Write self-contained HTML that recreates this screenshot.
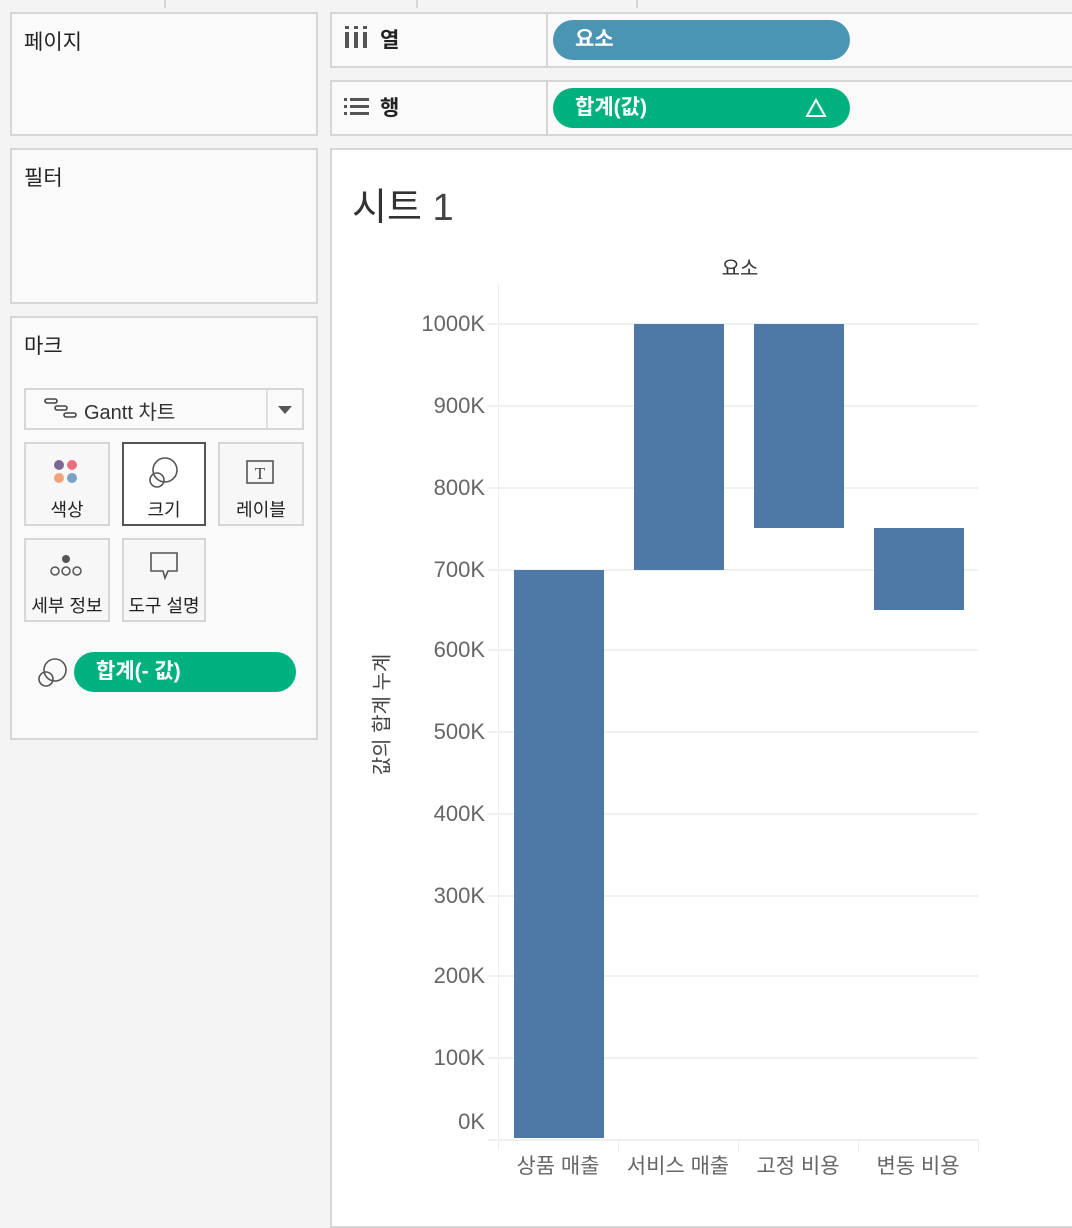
<!DOCTYPE html>
<html><head><meta charset="utf-8"><style>
*{margin:0;padding:0;box-sizing:border-box}
body{width:1072px;height:1196px;background:#f4f4f4;position:relative;overflow:hidden;font-family:"Liberation Sans","Noto Sans CJK KR",sans-serif;color:#222}
.p{position:absolute;background:#fafafa;border:2px solid #d6d6d6}
.t{position:absolute;font-size:21px}
.pill{position:absolute;border-radius:20px;color:#fff;font-size:21px;font-weight:bold;padding-left:22px;line-height:40px}
.btn{position:absolute;background:#f7f7f7;border:2px solid #d6d6d6;font-size:18px;text-align:center}
.lbl{position:absolute;right:0;width:150px;text-align:right;font-size:22px;color:#666}
.g{position:absolute;left:488px;width:490px;height:2px;background:#f0f0f0}
.bar{position:absolute;background:#4e79a7;width:90px}
.x{position:absolute;top:1150px;font-size:21px;color:#666;width:120px;text-align:center}
</style></head><body>
<div style="position:absolute;left:164px;top:0;width:2px;height:8px;background:#d6d6d6"></div>
<div style="position:absolute;left:416px;top:0;width:2px;height:8px;background:#d6d6d6"></div>
<div style="position:absolute;left:636px;top:0;width:2px;height:8px;background:#d6d6d6"></div>

<div class="p" style="left:10px;top:12px;width:308px;height:124px"></div>
<div class="t" style="left:24px;top:26px">페이지</div>
<div class="p" style="left:10px;top:148px;width:308px;height:156px"></div>
<div class="t" style="left:24px;top:162px">필터</div>
<div class="p" style="left:10px;top:316px;width:308px;height:424px"></div>
<div class="t" style="left:24px;top:330px">마크</div>

<div style="position:absolute;left:24px;top:388px;width:280px;height:42px;border:2px solid #d6d6d6;background:#fafafa"></div>
<div style="position:absolute;left:266px;top:390px;width:2px;height:38px;background:#e0e0e0"></div>
<svg style="position:absolute;left:42px;top:396px" width="36" height="26"><g fill="none" stroke="#444" stroke-width="1.6"><rect x="3" y="3" width="12" height="4" rx="2"/><rect x="13" y="10" width="12" height="4" rx="2"/><rect x="22" y="17" width="12" height="4" rx="2"/></g></svg>
<div style="position:absolute;left:84px;top:396px;font-size:20px;color:#333">Gantt 차트</div>
<div style="position:absolute;left:278px;top:406px;width:0;height:0;border-left:7px solid transparent;border-right:7px solid transparent;border-top:8px solid #555"></div>

<div class="btn" style="left:24px;top:442px;width:86px;height:84px"><div style="margin-top:52px">색상</div></div>
<svg style="position:absolute;left:52px;top:458px" width="28" height="28"><circle cx="7" cy="7" r="5" fill="#7a6796"/><circle cx="20" cy="7" r="5" fill="#ea6d7f"/><circle cx="7" cy="20" r="5" fill="#f0a37b"/><circle cx="20" cy="20" r="5" fill="#7aa1c6"/></svg>
<div class="btn" style="left:122px;top:442px;width:84px;height:84px;border-color:#555;background:#fff"><div style="margin-top:52px">크기</div></div>
<svg style="position:absolute;left:148px;top:456px" width="34" height="34"><g fill="none" stroke="#555" stroke-width="1.6"><circle cx="17" cy="14" r="12"/><circle cx="9" cy="24" r="7"/></g></svg>
<div class="btn" style="left:218px;top:442px;width:86px;height:84px"><div style="margin-top:52px">레이블</div></div>
<svg style="position:absolute;left:244px;top:458px" width="32" height="28"><rect x="3" y="3" width="26" height="22" fill="none" stroke="#555" stroke-width="1.6"/><text x="16" y="21" text-anchor="middle" font-family="Liberation Serif" font-size="17" fill="#444">T</text></svg>
<div class="btn" style="left:24px;top:538px;width:86px;height:84px"><div style="margin-top:52px">세부 정보</div></div>
<svg style="position:absolute;left:48px;top:552px" width="36" height="26"><circle cx="18" cy="7" r="4" fill="#555"/><g fill="none" stroke="#555" stroke-width="1.5"><circle cx="7" cy="19" r="4"/><circle cx="18" cy="19" r="4"/><circle cx="29" cy="19" r="4"/></g></svg>
<div class="btn" style="left:122px;top:538px;width:84px;height:84px"><div style="margin-top:52px">도구 설명</div></div>
<svg style="position:absolute;left:148px;top:550px" width="34" height="32"><path d="M3 3H29V21H20L17 28L15 21H3Z" fill="none" stroke="#555" stroke-width="1.6"/></svg>

<svg style="position:absolute;left:36px;top:656px" width="34" height="34"><g fill="none" stroke="#555" stroke-width="1.6"><circle cx="19" cy="14" r="11"/><circle cx="10" cy="23" r="7"/></g></svg>
<div class="pill" style="left:74px;top:652px;width:222px;background:#00b180">합계(- 값)</div>

<div class="p" style="left:330px;top:12px;width:750px;height:56px"></div>
<div style="position:absolute;left:546px;top:12px;width:2px;height:56px;background:#d6d6d6"></div>
<svg style="position:absolute;left:344px;top:24px" width="26" height="26"><g fill="#555"><rect x="1" y="2" width="4" height="3"/><rect x="1" y="8" width="4" height="16"/><rect x="10" y="2" width="4" height="3"/><rect x="10" y="8" width="4" height="16"/><rect x="19" y="2" width="4" height="3"/><rect x="19" y="8" width="4" height="16"/></g></svg>
<div class="t" style="left:380px;top:24px;font-weight:bold">열</div>
<div class="pill" style="left:553px;top:20px;width:297px;background:#4a95b3">요소</div>

<div class="p" style="left:330px;top:80px;width:750px;height:56px"></div>
<div style="position:absolute;left:546px;top:80px;width:2px;height:56px;background:#d6d6d6"></div>
<svg style="position:absolute;left:343px;top:96px" width="28" height="22"><g fill="#555"><rect x="1" y="2" width="3" height="3"/><rect x="7" y="2" width="19" height="3"/><rect x="1" y="9" width="3" height="3"/><rect x="7" y="9" width="19" height="3"/><rect x="1" y="16" width="3" height="3"/><rect x="7" y="16" width="19" height="3"/></g></svg>
<div class="t" style="left:380px;top:92px;font-weight:bold">행</div>
<div class="pill" style="left:553px;top:88px;width:297px;background:#00b180">합계(값)<svg style="position:absolute;left:252px;top:10px" width="22" height="20"><path d="M11 2L20 18H2Z" fill="none" stroke="#fff" stroke-width="2"/></svg></div>

<div style="position:absolute;left:330px;top:148px;width:750px;height:1080px;background:#fff;border:2px solid #d6d6d6"></div>
<div style="position:absolute;left:352px;top:176px;font-size:38px;color:#333">시트 <span style="font-weight:300;color:#444">1</span></div>
<div style="position:absolute;left:700px;top:252px;width:80px;text-align:center;font-size:20px;color:#333">요소</div>

<div style="position:absolute;left:498px;top:284px;width:1px;height:866px;background:#eee"></div>
<div class="g" style="top:323px"></div><div class="g" style="top:405px"></div><div class="g" style="top:487px"></div><div class="g" style="top:569px"></div><div class="g" style="top:649px"></div><div class="g" style="top:731px"></div><div class="g" style="top:813px"></div><div class="g" style="top:895px"></div><div class="g" style="top:975px"></div><div class="g" style="top:1057px"></div>
<div class="g" style="top:1139px"></div>

<div style="position:absolute;left:335px;top:0;width:150px;height:1196px">
<div class="lbl" style="top:311px">1000K</div><div class="lbl" style="top:393px">900K</div><div class="lbl" style="top:475px">800K</div><div class="lbl" style="top:557px">700K</div><div class="lbl" style="top:637px">600K</div><div class="lbl" style="top:719px">500K</div><div class="lbl" style="top:801px">400K</div><div class="lbl" style="top:883px">300K</div><div class="lbl" style="top:963px">200K</div><div class="lbl" style="top:1045px">100K</div><div class="lbl" style="top:1109px">0K</div>
</div>
<div style="position:absolute;left:310px;top:700px;width:140px;text-align:center;font-size:20px;color:#444;transform:rotate(-90deg)">값의 합계 누계</div>

<div class="bar" style="left:514px;top:570px;height:568px"></div>
<div class="bar" style="left:634px;top:324px;height:246px"></div>
<div class="bar" style="left:754px;top:324px;height:204px"></div>
<div class="bar" style="left:874px;top:528px;height:82px"></div>

<div style="position:absolute;left:618px;top:1140px;width:1px;height:12px;background:#eee"></div>
<div style="position:absolute;left:738px;top:1140px;width:1px;height:12px;background:#eee"></div>
<div style="position:absolute;left:858px;top:1140px;width:1px;height:12px;background:#eee"></div>
<div style="position:absolute;left:978px;top:1140px;width:1px;height:12px;background:#eee"></div>
<div class="x" style="left:498px">상품 매출</div>
<div class="x" style="left:618px">서비스 매출</div>
<div class="x" style="left:738px">고정 비용</div>
<div class="x" style="left:858px">변동 비용</div>
</body></html>
